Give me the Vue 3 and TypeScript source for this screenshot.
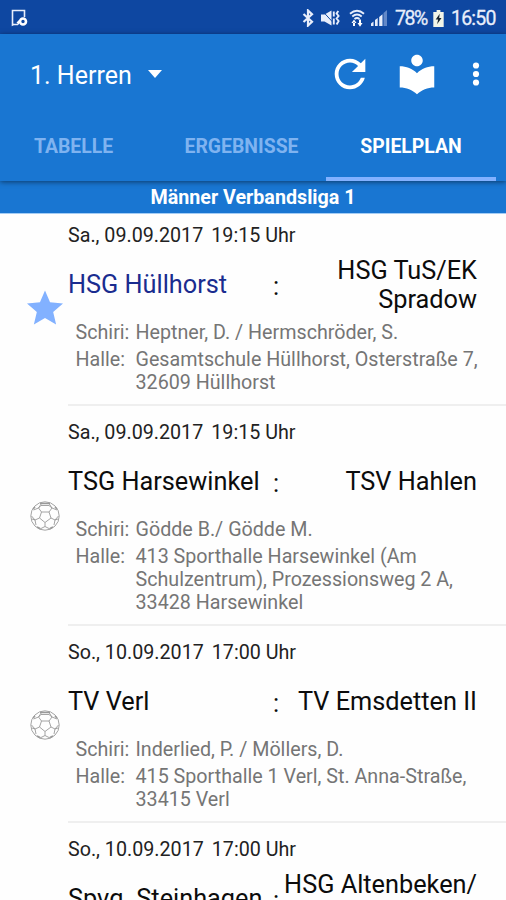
<script setup lang="ts">
interface Match {
  date: string
  time: string
  home: string
  away: string
  referees: string
  hall: string[]
  favourite?: boolean
}

const tabs: string[] = ['TABELLE', 'ERGEBNISSE', 'SPIELPLAN']
const activeTab = 'SPIELPLAN'

const matches: Match[] = [
  {
    date: 'Sa., 09.09.2017',
    time: '19:15 Uhr',
    home: 'HSG Hüllhorst',
    away: 'HSG TuS/EK Spradow',
    referees: 'Heptner, D. / Hermschröder, S.',
    hall: ['Gesamtschule Hüllhorst, Osterstraße 7,', '32609 Hüllhorst'],
    favourite: true,
  },
  {
    date: 'Sa., 09.09.2017',
    time: '19:15 Uhr',
    home: 'TSG Harsewinkel',
    away: 'TSV Hahlen',
    referees: 'Gödde B./ Gödde M.',
    hall: ['413 Sporthalle Harsewinkel (Am', 'Schulzentrum), Prozessionsweg 2 A,', '33428 Harsewinkel'],
  },
  {
    date: 'So., 10.09.2017',
    time: '17:00 Uhr',
    home: 'TV Verl',
    away: 'TV Emsdetten II',
    referees: 'Inderlied, P. / Möllers, D.',
    hall: ['415 Sporthalle 1 Verl, St. Anna-Straße,', '33415 Verl'],
  },
  {
    date: 'So., 10.09.2017',
    time: '17:00 Uhr',
    home: 'Spvg. Steinhagen',
    away: 'HSG Altenbeken/\n\u00a0',
    referees: '',
    hall: ['\u00a0', '\u00a0 '],
  },
]
</script>

<template>
  <div class="screen">
    <div class="status">
      <svg class="s-note" viewBox="0 0 18 18">
        <path d="M7 15.5H2.5L1.5 16V1.500H13.500V8" fill="none" stroke="#e8eefb" stroke-width="1.6" />
        <circle cx="12" cy="12.500" r="3" fill="none" stroke="#fff" stroke-width="2.600" />
        <path d="M5.500 13.500 8 11v5z" fill="#fff" />
      </svg>
      <span class="grow"></span>
      <svg class="s-bt" viewBox="0 0 12 18">
        <path d="M1.500 5 10 12.700 6 16.500V1.500l4 3.800L1.500 13" fill="none" stroke="#e8eefb" stroke-width="2.200" />
      </svg>
      <svg class="s-mute" viewBox="0 0 20 18">
        <path d="M1 5.500h3.500L11.500 1.500v15l-7-4H1z" fill="#e8eefb" />
        <path d="M1.500 1 14 14.500" stroke="#0e47a1" stroke-width="1" />
        <path d="M13.800 2.500v5M13.800 9.500v6M18.300 2l-1.700 2.500 2 2.500-2 2.500 2 2.500-2 3.500" fill="none" stroke="#e8eefb" stroke-width="1.900" />
      </svg>
      <svg class="s-wifi" viewBox="0 0 16 18">
        <path d="M1 4.700Q8-1.200 15 4.700M3.300 7.400Q8 3.700 12.700 7.400M5.500 10Q8 8 10.500 10" fill="none" stroke="#e8eefb" stroke-width="1.900" />
        <path d="M2.500 14h5L5 10.500zM8.500 14h5L11 17.700zM4 13.500h2V17H4zM10 10.500h2V14h-2z" fill="#fff" />
      </svg>
      <svg class="s-signal" viewBox="0 0 18 18">
        <path d="M1 17v-2.500l2.500-2V17zM5 17v-6l2.700-2V17zM9.200 17V8l3.300-2.800V17z" fill="#e8eefb" />
        <path d="M13.500 17V4L17 1v16z" fill="#6288c8" />
      </svg>
      <span class="pct">78%</span>
      <svg class="s-batt" viewBox="0 0 11 18">
        <path d="M3.500 0h4v2H11v16H0V2h3.500z" fill="#f2f5e8" />
        <path d="M6.800 4 2.500 10h2.600L4 15l4.700-6.500H6.200z" fill="#17242f" />
      </svg>
      <span class="clock">16:50</span>
    </div>

    <header class="bar">
      <div class="tools">
        <span class="title">1. Herren</span>
        <svg class="caret" viewBox="0 0 14 8"><path d="M0 0h14L7 8z" fill="#fff" /></svg>
        <span class="grow"></span>
        <svg class="refresh" viewBox="0 0 24 24">
          <path fill="#fff" d="M17.650 6.350C16.200 4.900 14.210 4 12 4c-4.420 0-7.990 3.580-7.990 8s3.570 8 7.990 8c3.730 0 6.840-2.550 7.730-6h-2.080c-.82 2.330-3.040 4-5.650 4-3.310 0-6-2.690-6-6s2.690-6 6-6c1.660 0 3.140.69 4.220 1.780L13 11h7V4l-2.350 2.350z" />
        </svg>
        <svg class="library" viewBox="0 0 24 24">
          <path fill="#fff" d="M12 11.550C9.640 9.350 6.480 8 3 8v11c3.480 0 6.640 1.350 9 3.550 2.360-2.190 5.520-3.550 9-3.550V8c-3.480 0-6.640 1.350-9 3.550zM12 8c1.660 0 3-1.340 3-3s-1.340-3-3-3-3 1.340-3 3 1.340 3 3 3z" />
        </svg>
        <svg class="more" viewBox="0 0 8 26">
          <circle v-for="y in [4.500, 13, 21.500]" :key="y" cx="4" :cy="y" r="3.100" fill="#fff" />
        </svg>
      </div>
      <nav class="tabs">
        <div v-for="tab in tabs" :key="tab" class="tab" :class="{ active: tab === activeTab }"><span>{{ tab }}</span></div>
      </nav>
    </header>

    <div class="league"><span>Männer Verbandsliga 1</span></div>

    <main class="list">
      <article v-for="(m, i) in matches" :key="i" class="match">
        <div class="mark">
          <svg v-if="m.favourite" class="star" viewBox="2 2 20 19">
            <path fill="#82b1ff" d="M12 17.270 18.180 21l-1.640-7.030L22 9.240l-7.190-.61L12 2 9.190 8.630 2 9.240l5.460 4.730L5.820 21z" />
          </svg>
          <svg v-else class="ball" viewBox="0 0 30 30" fill="none" stroke="#9a9a9a" stroke-width=".9">
            <circle cx="15" cy="15" r="14.200" />
            <path d="M11.500 11h7.500l2 6-6 4.500L9.500 17zM11.500 11 8.500 7 3.500 9M19 11l3-4 5 2M21 17l4 2 3.500-4M9.500 17l-4.500 2-3.500-4M15 21.500v4M8.500 7l3-4.500M22 7l-3-4.500M8.500 7 11 4.500h8L22 7M5 19l1 5M25 19l-1 5M15 25.500l-5 2.500M15 25.500l5 2.500M5 19l-3-1M25 19l3-1" />
            <path d="M10 2.500h10M3 8l2-2M27 8l-2-2M7 26l3 1.500M23 26l-3 1.500" stroke-width="1.600" />
          </svg>
        </div>
        <div class="body">
          <div class="date"><span>{{ m.date }}</span><span>{{ m.time }}</span></div>
          <div class="teams">
            <span class="home" :class="{ own: m.favourite }">{{ m.home }}</span>
            <span class="colon">:</span>
            <span class="away">{{ m.away }}</span>
          </div>
          <template v-if="m.referees">
            <div class="info">
              <span>Schiri:</span>
              <span>{{ m.referees }}</span>
            </div>
            <div class="info hall">
              <span>Halle:</span>
              <span><span v-for="line in m.hall" :key="line" class="line">{{ line }}</span></span>
            </div>
          </template>
          <div v-else class="pending"></div>
        </div>
      </article>
    </main>
  </div>
</template>

<style>
body {
  margin: 0;
  background: #fefefe;
}
</style>

<style scoped>
.screen {
  width: 506px;
  height: 900px;
  overflow: hidden;
  background: #fefefe;
  font-family: Roboto, "Liberation Sans", sans-serif;
  display: flex;
  flex-direction: column;
}
svg { display: block; flex: none; }
.grow { flex: 1; }
.status {
  flex: none;
  height: 34px;
  box-sizing: border-box;
  padding: 2px 10px 0 11px;
  background: #0e47a1;
  color: #e8eefb;
  display: flex;
  align-items: center;
  font-size: 19.500px;
  white-space: nowrap;
}
.s-note { width: 18px; height: 18px; }
.s-bt { width: 12px; height: 18px; margin-right: 6px; }
.s-mute { width: 20px; height: 18px; margin-right: 9px; }
.s-wifi { width: 16px; height: 18px; margin-right: 5px; }
.s-signal { width: 18px; height: 18px; margin-right: 7px; }
.s-batt { width: 11px; height: 17px; margin-right: 7px; }
.pct { width: 38px; letter-spacing: -1.400px; -webkit-text-stroke: 0.300px #e8eefb; }
.clock { width: 45px; letter-spacing: -0.800px; -webkit-text-stroke: 0.300px #e8eefb; }
.bar {
  flex: none;
  height: 147px;
  background: #1976d2;
  color: #fff;
  position: relative;
  z-index: 2;
  box-shadow: 0 1px 5px rgba(0, 0, 0, 0.5);
}
.tools {
  height: 80px;
  display: flex;
  align-items: center;
  padding: 0 26px 0 30px;
}
.title { font-size: 25px; padding-top: 2px; }
.caret { width: 14px; height: 8px; margin-left: 16px; }
.refresh { width: 46px; height: 46px; margin-right: 21px; }
.library { width: 46px; height: 46px; margin-right: 32px; }
.more { width: 8px; height: 26px; }
.tabs {
  height: 67px;
  display: grid;
  grid-template-columns: 169px 169px 170px;
  margin-left: -12px;
  padding-right: 10px;
}
.tab {
  box-sizing: border-box;
  padding-top: 20px;
  text-align: center;
  font-size: 19.400px;
  font-weight: 700;
  line-height: 25px;
  color: #7fb3f0;
}
.tab:first-child { padding-left: 2px; }
.tab.active {
  color: #fff;
  border-bottom: 4px solid #82b1ff;
}
.league {
  flex: none;
  height: 32px;
  background: #1976d2;
  color: #fff;
  text-align: center;
  font-size: 19.700px;
  font-weight: 700;
  line-height: 33px;
  position: relative;
  z-index: 1;
  border-bottom: 1px solid #a4cdf5;
}
.list { margin-top: -5px; }
.match { display: flex; }
.mark {
  width: 68px;
  display: flex;
  align-items: center;
  padding-left: 27px;
  box-sizing: border-box;
}
.star { width: 36px; height: 35px; }
.ball { width: 30px; height: 30px; margin-left: 3px; }
.body {
  flex: 1;
  border-bottom: 2px solid #efefef;
  padding: 15px 0 10px;
}
.date {
  display: flex;
  gap: 8px;
  font-size: 19.700px;
  line-height: 24px;
  color: #222;
}
.teams {
  height: 73px;
  display: grid;
  grid-template-columns: 200px 16px 193px;
  align-items: center;
  font-size: 25.300px;
  line-height: 29px;
  color: #0c0c0c;
}
.own { color: #1a2c8f; }
.colon { text-align: center; padding-top: 3px; }
.away { text-align: right; white-space: pre-line; }
.info {
  display: grid;
  grid-template-columns: 60px 1fr;
  padding-left: 7.500px;
  font-size: 19.700px;
  line-height: 23px;
  color: #757575;
  white-space: nowrap;
}
.hall { margin-top: 4px; }
.line { display: block; }
.pending { height: 73px; }
</style>
